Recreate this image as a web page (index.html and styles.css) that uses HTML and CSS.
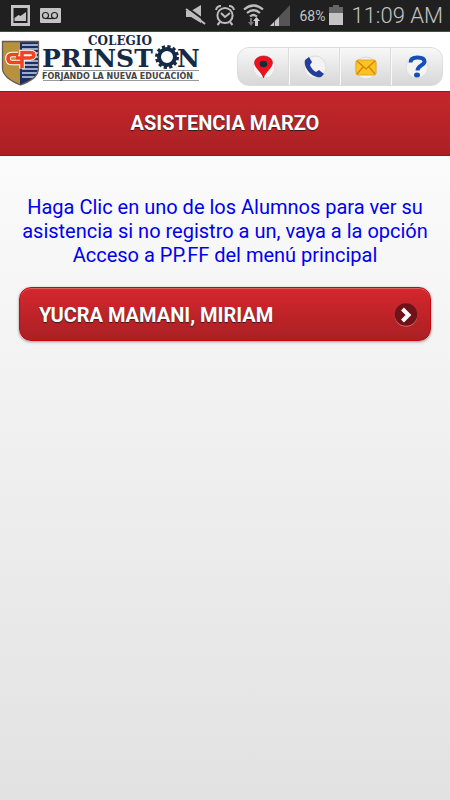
FILE: index.html
```html
<!DOCTYPE html>
<html lang="es">
<head>
<meta charset="utf-8">
<meta name="viewport" content="width=device-width, initial-scale=1">
<title>Asistencia Marzo</title>
<link rel="stylesheet" href="styles.css">
</head>
<body>
<div class="status">
  <svg class="status-left" width="60" height="31" viewBox="0 0 60 31" aria-hidden="true">
    <path fill="#c4c4c4" fill-rule="evenodd" d="M11 5h19v21H11zM13.500 8v15h14V8z"/>
    <path fill="#c4c4c4" d="M14.500 21v-3l4-3 2 1 5.500-4v9z"/>
    <rect x="40" y="8" width="21" height="15" rx="1" fill="#c4c4c4"/>
    <g fill="none" stroke="#222" stroke-width="1.200"><circle cx="45.500" cy="15.500" r="3"/><circle cx="54.500" cy="15.500" r="3"/><path d="M45.500 18.500h9"/></g>
  </svg>
  <svg class="status-right" width="112" height="31" viewBox="0 0 112 31" aria-hidden="true">
    <g transform="translate(-186 0)">
      <path fill="#bdbdbd" d="M187 11h5l10-6v18l-10-6h-5z"/>
      <path stroke="#202020" stroke-width="2" d="M188 7.500l20 14.500"/>
      <path stroke="#bdbdbd" stroke-width="2" d="M187 9l19 15"/>
      <g fill="none" stroke="#bdbdbd" stroke-width="2"><circle cx="226" cy="15.500" r="7.600"/><path d="M217 10a5 5 0 0 1 5-4M230 6a5 5 0 0 1 5 4M221 22l-2.500 3M231 22l2.500 3M222 13l4 4 5-4"/></g>
      <g fill="none" stroke="#bdbdbd" stroke-width="2.200"><path d="M245 9.500q9.500-8 19 0M248 13q6.500-5.500 13 0M251 16.500q3.500-3 7 0"/></g>
      <path fill="#777" d="M251 18h2v4h2l-3 4-3-4h2z"/>
      <path fill="#d0d0d0" d="M257.500 17l3.500 4h-2v5h-3v-5h-2z"/>
      <path fill="#555" d="M291 5v21h-20z"/>
      <path fill="#c6c6c6" d="M271 26l4-4v4zM276 26v-5l4-4v9z"/>
    </g>
  </svg>
  <span class="percent">68%</span>
  <svg class="battery" width="14" height="21" viewBox="0 0 14 21" aria-hidden="true"><path fill="#666" d="M4 0h6v2h4v7H0V2h4z"/><path fill="#c4c4c4" d="M0 8h14v12H0z"/></svg>
  <time class="clock">11:09 AM</time>
</div>
<header class="top">
  <svg class="logo" width="202" height="58" viewBox="0 32 202 58" role="img" aria-label="Colegio Prinston">
    <defs>
      <clipPath id="shield"><path d="M3 41h35v26c0 9-8 13-17.500 17C11 80 3 75 3 67z"/></clipPath>
    </defs>
    <g clip-path="url(#shield)">
      <path fill="#b8913f" d="M2 40h18v45H2z"/>
      <path fill="#1c2f62" d="M20 40h20v45H20z"/>
      <path stroke="#c8d3e8" stroke-width="1.300" d="M22 44h17M22 48h17M22 52h17M22 56h17M22 60h17M22 64h17M22 68h17M22 72h17M22 76h17"/>
    </g>
    <path fill="none" stroke="#645b55" stroke-width="1.300" d="M2.500 40.500h36V67c0 9-8 13-18 17-10-4-18-9-18-17z"/>
    <g fill="none">
      <path stroke="#fff" stroke-width="5.500" d="M18 53.500h-6q-4 0-4 4t4 4h10V51.500h8q4 0 4 2.500t-4 3H16M22 61v6.500"/>
      <path stroke="#f0441f" stroke-width="3.600" d="M18 53.500h-6q-4 0-4 4t4 4h10V51.500h8q4 0 4 2.500t-4 3H16M22 61v6"/>
    </g>
    <g class="logo-serif">
      <text class="logo-small" x="88" y="44">COLEGIO</text>
      <text class="logo-big" x="42" y="66">PRINST</text>
      <text class="logo-big" x="177" y="66">N</text>
    </g>
    <circle cx="167" cy="56" r="8" fill="#fff" stroke="#152a46" stroke-width="4"/>
    <circle cx="167" cy="56" r="10.500" fill="none" stroke="#152a46" stroke-width="3" stroke-dasharray="3.200 2.298"/>
    <path stroke="#999" stroke-width="1" d="M43 69.500h156M43 79.500h156"/>
    <text class="logo-tag" x="42" y="78">FORJANDO LA NUEVA EDUCACIÓN</text>
  </svg>
  <nav class="tools">
    <a href="#mapa" aria-label="Ubicación"><svg width="28" height="28" viewBox="0 0 28 28"><circle cx="14" cy="15" r="11" fill="#f3f3f3" stroke="#ddd"/><path fill="#ee111c" stroke="#a8161c" stroke-width=".6" d="M13.500 26C12 20 4.500 16 4.500 10.500a9 6.500 0 0 1 18 0C22.500 16 15 20 13.500 26z"/><ellipse cx="13.500" cy="12" rx="3.800" ry="3.200" fill="#172b3e"/></svg></a>
    <a href="#telefono" aria-label="Teléfono"><svg width="28" height="28" viewBox="0 0 28 28"><circle cx="14" cy="15" r="11" fill="#f3f3f3" stroke="#ddd"/><path fill="#263e9b" d="M4 8l4-3 3 5-2 3q2 5 6 7l3-2 5 4-3 3c-7 2-18-8-16-17z"/></svg></a>
    <a href="#correo" aria-label="Correo"><svg width="28" height="28" viewBox="0 0 28 28"><circle cx="14" cy="16" r="11" fill="#f3f3f3" stroke="#d5d5d5"/><rect x="4" y="8" width="20" height="15" rx="2" fill="#ffc51c" stroke="#e7a522"/><path fill="none" stroke="#d3801b" stroke-width="1.300" d="M5 9l9 8 9-8M5 22l6-7M23 22l-6-7"/></svg></a>
    <a href="#ayuda" aria-label="Ayuda"><svg width="28" height="28" viewBox="0 0 28 28"><circle cx="14" cy="15" r="11" fill="#f3f3f3" stroke="#ddd"/><path fill="none" stroke="#1450b8" stroke-width="4" d="M7.500 10.500q0-5 7-5 7 0 7 4c0 4-7 4-7 9"/><ellipse cx="14" cy="23" rx="3" ry="2.500" fill="#1450b8"/></svg></a>
  </nav>
</header>
<h1 class="title">ASISTENCIA MARZO</h1>
<main class="content">
  <p class="hint">Haga Clic en uno de los Alumnos para ver su asistencia si no registro a un, vaya a la opción Acceso a PP.FF del menú principal</p>
  <a class="student" href="#alumno">
    <span>YUCRA MAMANI, MIRIAM</span>
    <svg width="24" height="24" viewBox="0 0 24 24" aria-hidden="true"><circle cx="12" cy="12.500" r="11.300" fill="#d5686b"/><circle cx="12" cy="11.500" r="11.300" fill="#701318"/><path fill="none" stroke="#fff" stroke-width="4" d="M8.500 6l6 6-6 6"/></svg>
  </a>
</main>
</body>
</html>
```
FILE: styles.css
```css
* {
  box-sizing: border-box;
}

body {
  margin: 0;
  min-height: 100vh;
  display: flex;
  flex-direction: column;
  font-family: Roboto, "Liberation Sans", sans-serif;
  font-size: 20px;
  line-height: 24px;
  background: #e2e2e2;
}

svg {
  display: block;
  flex: none;
}

.status {
  display: flex;
  align-items: center;
  height: 31px;
  padding-right: 7px;
  background: #202020;
  color: #c4c4c4;
  white-space: nowrap;
}

.status-left {
  overflow: visible;
}

.status-right {
  margin-left: auto;
}

.percent {
  width: 30px;
  margin-left: 2px;
  font-size: 14px;
}

.battery {
  margin-right: 8px;
}

.clock {
  font-size: 22px;
  font-weight: 300;
}

.top {
  display: flex;
  align-items: center;
  justify-content: space-between;
  height: 60px;
  padding-right: 7px;
  border-top: 1px solid #d20f17;
  background: #fff;
}

.logo-serif {
  font-family: "DejaVu Serif", serif;
  font-weight: 700;
  fill: #152a46;
}

.logo-small {
  font-size: 12px;
}

.logo-big {
  font-size: 25px;
}

.logo-tag {
  font: 700 8px "DejaVu Sans", sans-serif;
  fill: #444;
}

.tools {
  display: grid;
  grid-template-columns: repeat(4, 51px);
  height: 39px;
  margin-top: 9px;
  border: 1px solid #ddd;
  border-radius: 12px;
  background: linear-gradient(#f8f8f8, #d7d7d7);
  overflow: hidden;
}

.tools a {
  display: grid;
  place-items: center;
}

.tools a + a {
  border-left: 1px solid #f8f8f8;
  box-shadow: -1px 0 #dcdcdc;
}

.title {
  margin: 0;
  padding: 19px 16px 20px;
  border: 1px solid #c4050c;
  border-width: 1px 0;
  background: linear-gradient(#c4272b, #ab2024);
  color: #fff;
  font-size: 20px;
  font-weight: 700;
  text-align: center;
  text-shadow: 0 1px 1px #222;
}

.content {
  flex: 1;
  padding: 39px 19px 20px;
  background: linear-gradient(#fbfbfb, #e2e2e2);
}

.hint {
  margin: 0 0 20px;
  color: #0000f0;
  text-align: center;
}

.student {
  display: flex;
  align-items: center;
  justify-content: space-between;
  padding: 15px 12px 13px 19px;
  border: 1px solid #c4070f;
  border-radius: 12px;
  background: linear-gradient(#d4272d, #aa2024);
  box-shadow: inset 0 1px #dc6266, 0 1px 3px #999;
  color: #fff;
  font-weight: 700;
  text-decoration: none;
  text-shadow: 0 1px 1px #222;
}
```
